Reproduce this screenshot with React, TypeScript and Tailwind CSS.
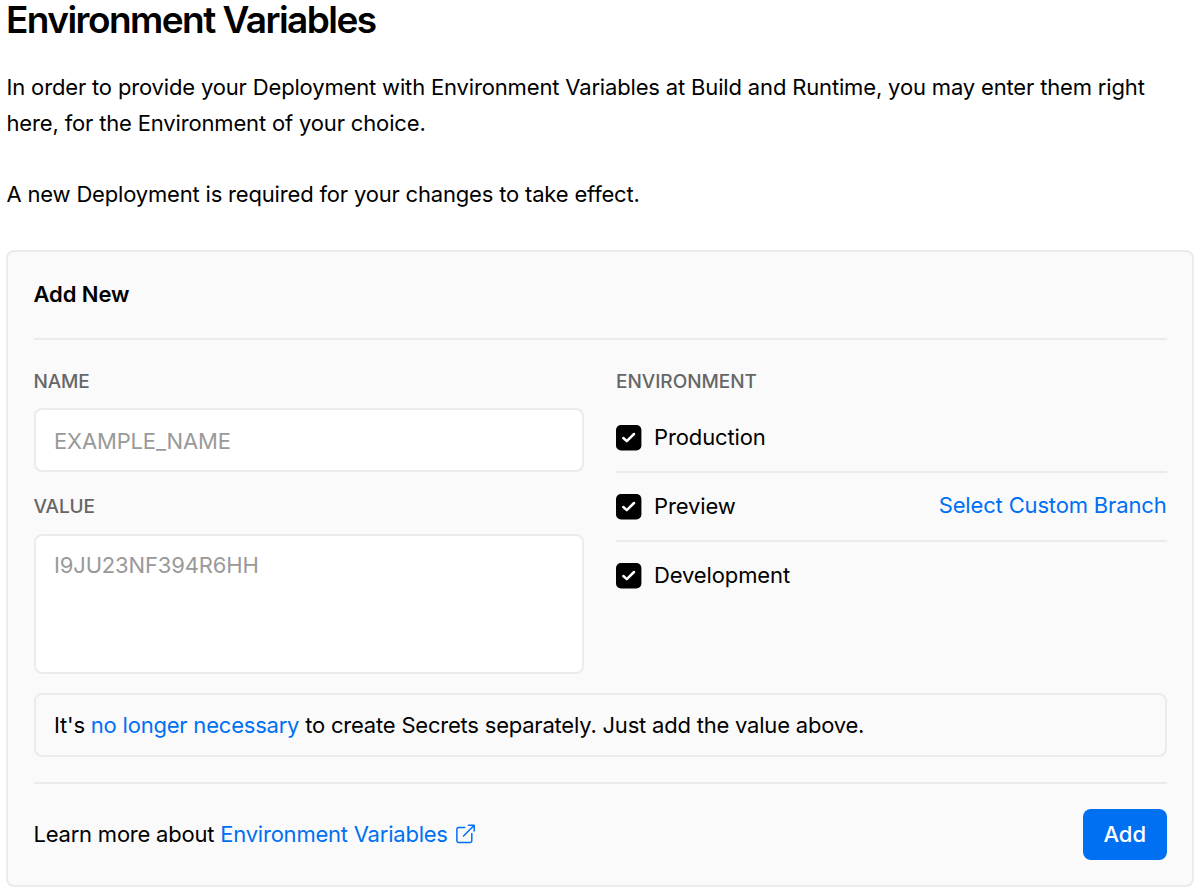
import React from "react";

const environments = ["Production", "Preview", "Development"];

function Check() {
  return (
    <svg className="mt-px shrink-0" width="26" height="26" viewBox="0 0 26 26" fill="none">
      <rect width="25.4" height="25.4" rx="5" fill="#000" />
      <path d="M7.3 13l3.5 3.1L18 9" stroke="white" strokeWidth="2.5" strokeLinecap="round" strokeLinejoin="round" />
    </svg>
  );
}

export default function App() {
  return (
    <main className="h-[894px] w-[1200px] bg-white px-[6px] font-['Inter',sans-serif] text-[22px] tracking-[-0.16px] text-black">
      <h1 className="h-[69px] text-[37px] leading-[40px] font-semibold tracking-[-1.55px]">Environment Variables</h1>
      <p className="h-[107px] pl-[0.5px] leading-[36px]">
        In order to provide your Deployment with Environment Variables at Build and Runtime, you may enter them right
        <br />
        here, for the Environment of your choice.
      </p>
      <p className="h-[74px] pl-[0.5px] leading-[36px] tracking-[-0.18px]">A new Deployment is required for your changes to take effect.</p>
      <section className="h-[637px] w-[1188px] rounded-[8px] border-2 border-[#ebebeb] bg-[#fafafa] px-[25.5px]">
        <h2 className="h-[88px] border-b-2 border-[#ebebeb] pt-[24px] leading-[36px] font-semibold tracking-[-0.1px]">Add New</h2>
        <div className="flex gap-8">
          <div className="w-[550.5px]">
            <label htmlFor="name" className="block h-[68px] pt-[30px] text-[19px] leading-[24px] font-medium tracking-[-0.15px] text-[#666]">NAME</label>
            <input id="name" placeholder="EXAMPLE_NAME" className="block h-[64px] w-full rounded-[8px] border-2 border-[#ebebeb] bg-white px-[18.5px] pt-[2px] placeholder:text-[#999]" />
            <label htmlFor="value" className="block h-[62px] pt-[23px] text-[19px] leading-[24px] font-medium tracking-[-0.1px] text-[#666]">VALUE</label>
            <textarea id="value" placeholder="I9JU23NF394R6HH" className="block h-[140px] w-full resize-none rounded-[8px] border-2 border-[#ebebeb] bg-white px-[18.5px] pt-[11px] leading-[36px] placeholder:text-[#999]" />
          </div>
          <div className="w-[550.5px]">
            <div className="h-[64px] pt-[30px] text-[19px] leading-[24px] font-medium tracking-[-0.03px] text-[#666]">ENVIRONMENT</div>
            {environments.map((name) => (
              <div key={name} className="flex h-[69px] items-center border-b-2 border-[#ebebeb] last:h-[67px] last:border-0">
                <Check />
                <span className="ml-3 tracking-[-0.12px]">{name}</span>
                {name === "Preview" && <a className="mt-[-3px] ml-auto text-[#0070f3]">Select Custom Branch</a>}
              </div>
            ))}
          </div>
        </div>
        <div className="mt-[19px] flex h-[64px] items-center rounded-[8px] border-2 border-[#ebebeb] px-[18.5px] tracking-[-0.21px]">
          <span>It's <a className="text-[#0070f3]">no longer necessary</a> to create Secrets separately. Just add the value above.</span>
        </div>
        <footer className="mt-[25px] flex h-[103px] items-center border-t-2 border-[#ebebeb] tracking-[-0.22px]">
          <span className="-mt-px">Learn more about <a className="text-[#0070f3]">Environment Variables</a></span>
          <svg className="mt-[-2px] ml-2" width="20" height="20" viewBox="0 0 20 20" fill="none" stroke="#0070f3" strokeWidth="1.5" strokeLinecap="round" strokeLinejoin="round">
            <path d="M15.8 9.5v7.2a1.8 1.8 0 0 1-1.8 1.8H2.7A1.8 1.8 0 0 1 .9 16.700V5.300A1.8 1.800 0 0 1 2.7 3.500h6M12.500 1.300h5.700V7M7.500 12l10.700-10.700" />
          </svg>
          <button className="ml-auto h-[51px] w-[83.5px] rounded-[8px] bg-[#0070f3] font-medium tracking-normal text-white">Add</button>
        </footer>
      </section>
    </main>
  );
}
